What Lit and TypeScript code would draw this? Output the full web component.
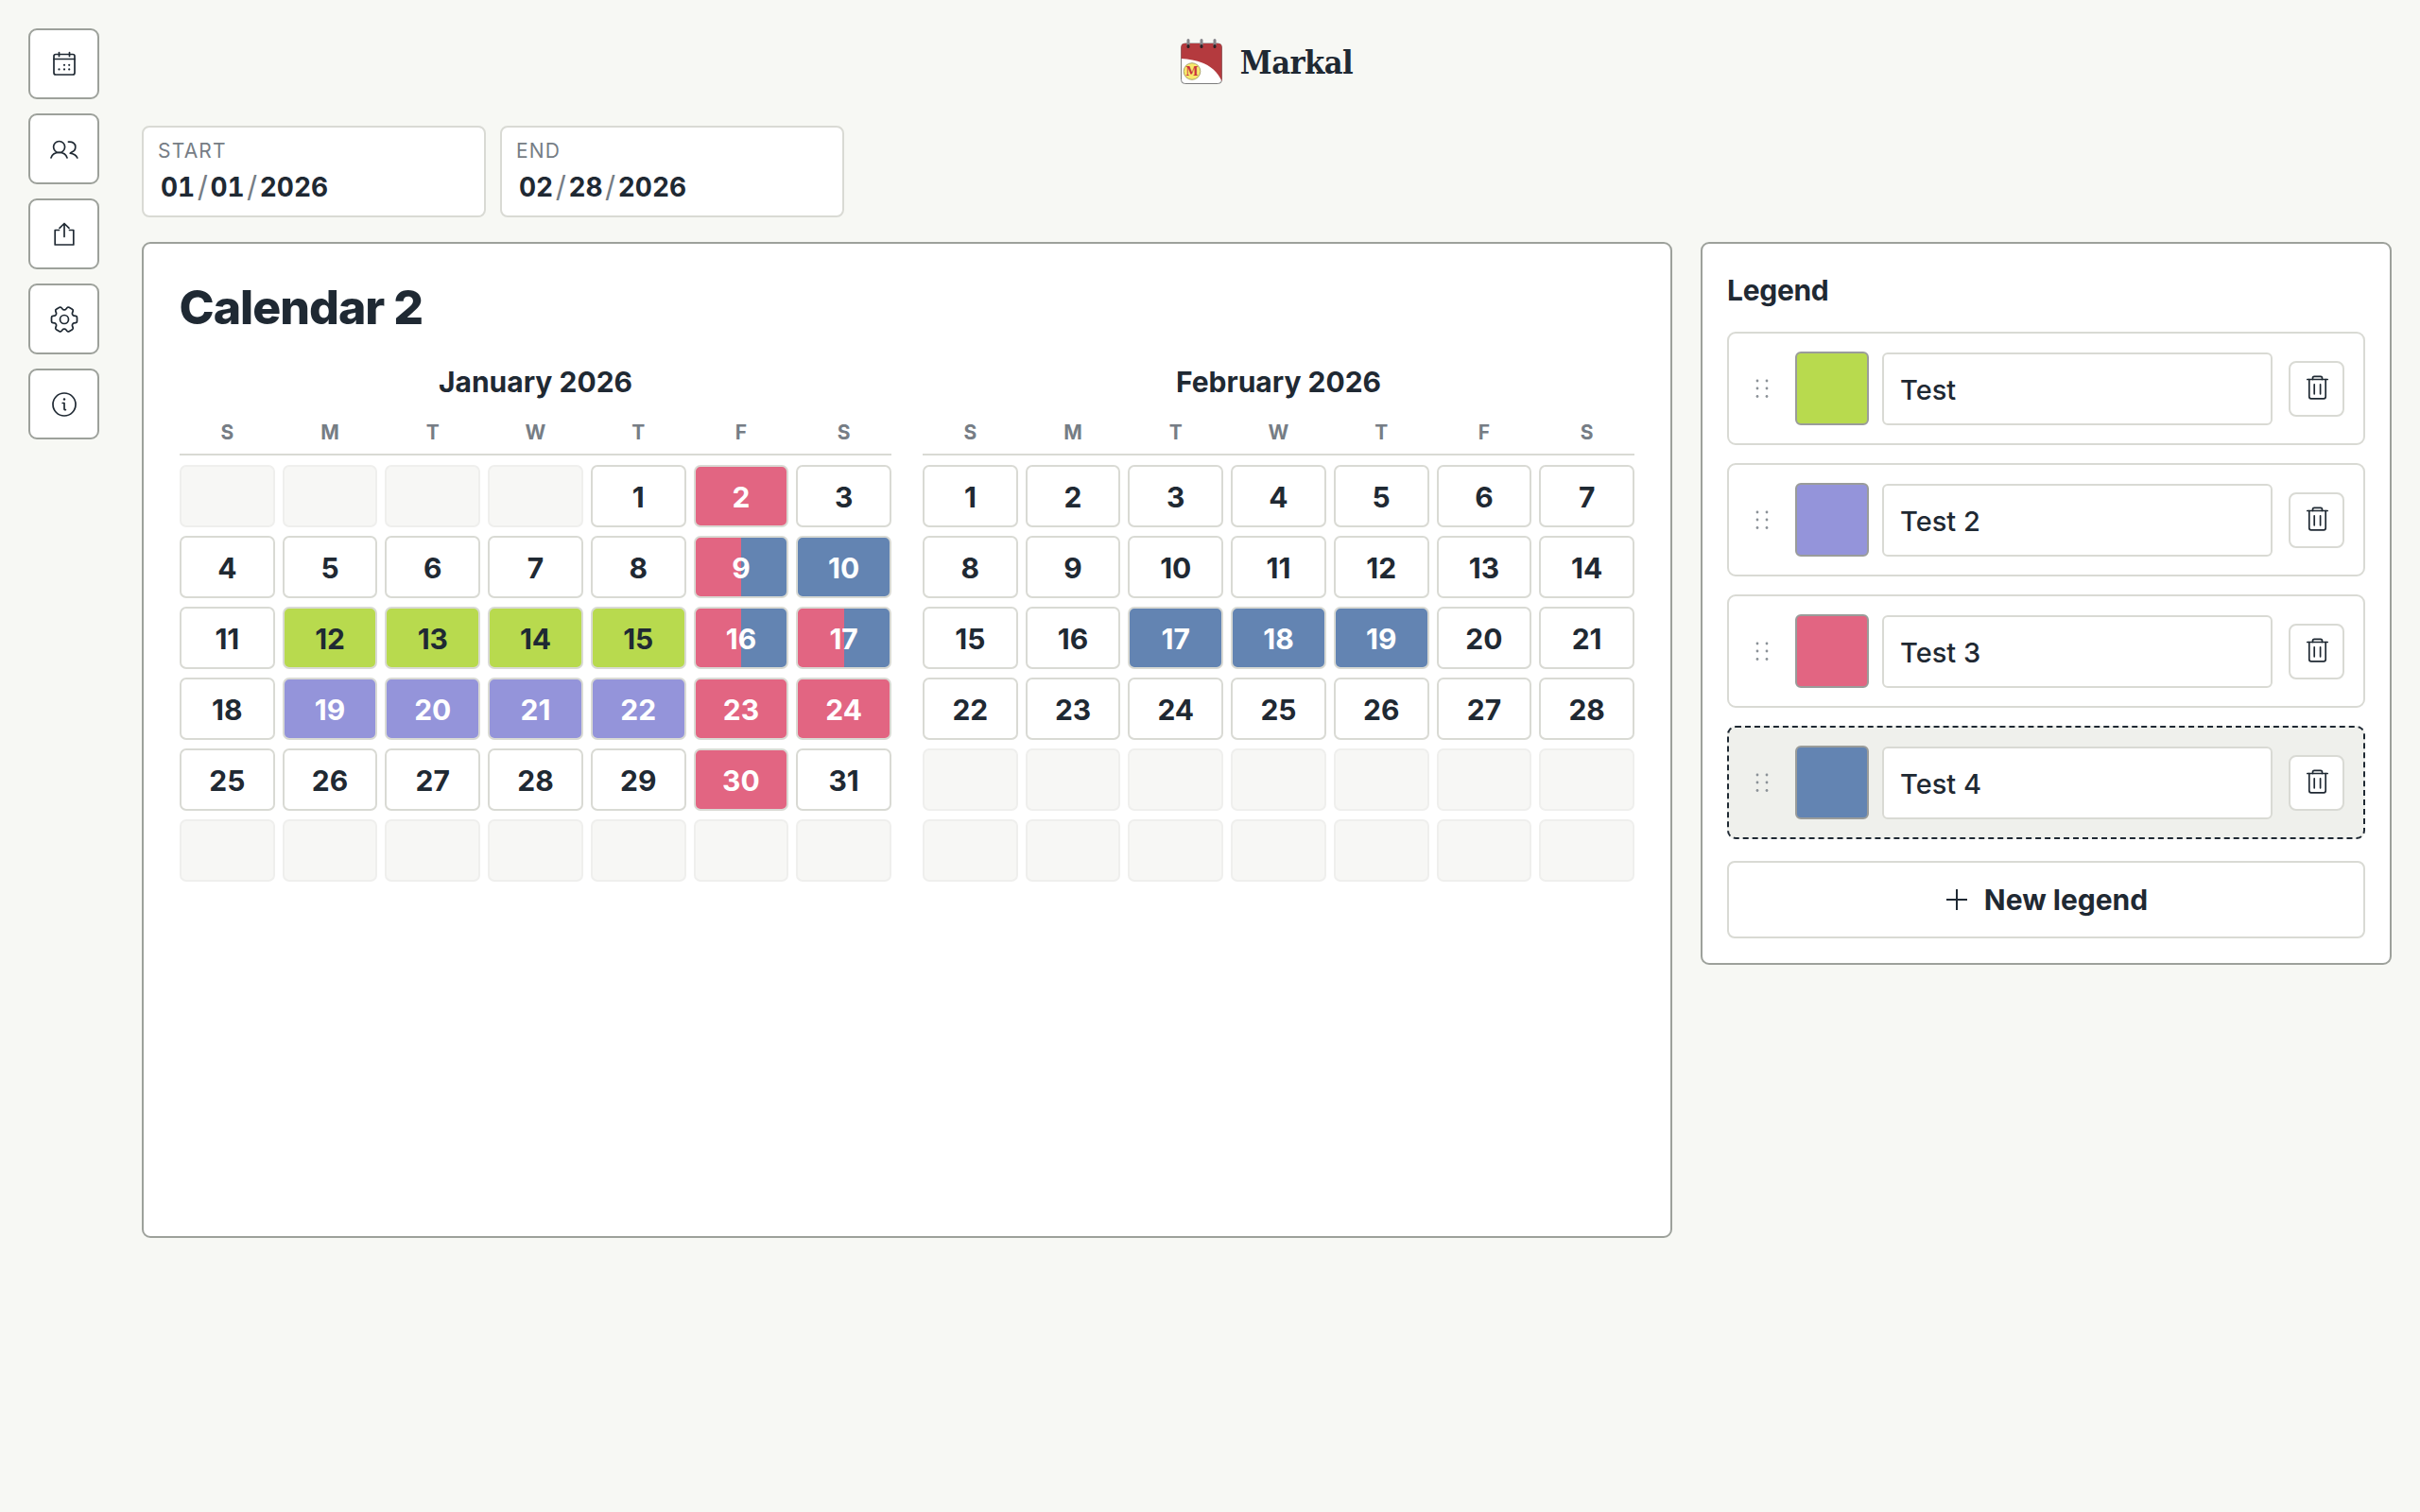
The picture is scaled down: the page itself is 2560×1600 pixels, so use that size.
import { LitElement, html, css, svg } from 'lit';
import { customElement } from 'lit/decorators.js';
import { classMap } from 'lit/directives/class-map.js';

const PINK = '#e26582';
const BLUE = '#6384b2';
const GREEN = '#b8da4e';
const PURPLE = '#9494da';

type Mark = { fill: string; dark?: boolean };

const g: Mark = { fill: GREEN, dark: true };
const pu: Mark = { fill: PURPLE };
const pk: Mark = { fill: PINK };
const bl: Mark = { fill: BLUE };
const split: Mark = { fill: `linear-gradient(90deg, ${PINK} 50%, ${BLUE} 50%)` };

const MONTHS = [
  {
    title: 'January 2026',
    offset: 4,
    days: 31,
    marks: {
      2: pk, 9: split, 10: bl,
      12: g, 13: g, 14: g, 15: g, 16: split, 17: split,
      19: pu, 20: pu, 21: pu, 22: pu, 23: pk, 24: pk,
      30: pk,
    } as Record<number, Mark>,
  },
  {
    title: 'February 2026',
    offset: 0,
    days: 28,
    marks: { 17: bl, 18: bl, 19: bl } as Record<number, Mark>,
  },
];

const LEGENDS = [
  { name: 'Test', color: GREEN },
  { name: 'Test 2', color: PURPLE },
  { name: 'Test 3', color: PINK },
  { name: 'Test 4', color: BLUE, dragging: true },
];

const WEEKDAYS = ['S', 'M', 'T', 'W', 'T', 'F', 'S'];

const icon = (body: unknown) => html`<svg class="icon" viewBox="0 0 30 30">${body}</svg>`;

const calendarIcon = icon(svg`
  <rect x="4" y="4.5" width="22" height="21.5" rx="2" />
  <path d="M4 9.5h22M9.5 2.5v4M20.5 2.5v4" />
  <g class="dots">
    <circle cx="15" cy="15.8" r="1.1" /><circle cx="20.2" cy="15.8" r="1.1" />
    <circle cx="9.5" cy="20.4" r="1.1" /><circle cx="15" cy="20.4" r="1.1" /><circle cx="20.2" cy="20.4" r="1.1" />
  </g>
`);

const usersIcon = icon(svg`
  <circle cx="9.6" cy="12.5" r="6" />
  <path d="M1 24c1.2-3.8 4.4-5.6 8.6-5.6s7.2 1.8 8.4 5.600" />
  <path d="M19.400 7.200c4.200-.6 7.400 1.800 7.400 5.200 0 2.400-1.400 4.600-4 5.600-.8.300-1.600.800-1.600 1.200 3 .4 6.200 1.900 7.600 4.800" />
`);

const shareIcon = icon(svg`
  <path d="M9.500 10.500H5.200v15.500h19.600V10.500H20.500" />
  <path d="M15 17.500V3.500M10 8.300l5-4.800 5 4.800" />
`);

const gearIcon = html`<svg class="icon" viewBox="2 2 20 20">
  <g transform="rotate(90 12 12)" stroke-width="1.150">
    <path d="M9.594 3.940c.09-.542.56-.94 1.110-.94h2.593c.55 0 1.020.398 1.110.94l.213 1.281c.063.374.313.686.645.870.074.040.147.083.22.127.325.196.72.257 1.075.124l1.217-.456a1.125 1.125 0 0 1 1.370.49l1.296 2.247a1.125 1.125 0 0 1-.26 1.431l-1.003.827c-.293.241-.438.613-.43.992a7.723 7.723 0 0 1 0 .255c-.008.378.137.75.43.991l1.004.827c.424.35.534.955.26 1.430l-1.298 2.247a1.125 1.125 0 0 1-1.369.491l-1.217-.456c-.355-.133-.75-.072-1.076.124a6.470 6.470 0 0 1-.22.128c-.331.183-.581.495-.644.869l-.213 1.281c-.09.543-.56.94-1.110.94h-2.594c-.55 0-1.019-.398-1.110-.94l-.213-1.281c-.062-.374-.312-.686-.644-.87a6.520 6.520 0 0 1-.22-.127c-.325-.196-.72-.257-1.076-.124l-1.217.456a1.125 1.125 0 0 1-1.369-.49l-1.297-2.247a1.125 1.125 0 0 1 .26-1.431l1.004-.827c.292-.24.437-.613.43-.991a6.932 6.932 0 0 1 0-.255c.007-.38-.138-.751-.43-.992l-1.004-.827a1.125 1.125 0 0 1-.26-1.430l1.297-2.247a1.125 1.125 0 0 1 1.370-.491l1.216.456c.356.133.751.072 1.076-.124.072-.044.146-.086.22-.128.332-.183.582-.495.644-.869l.214-1.280Z" />
    <circle cx="12" cy="12" r="3" />
  </g>
</svg>`;

const infoIcon = icon(svg`
  <circle cx="15" cy="15" r="12" />
  <path d="M13.200 13.500H15v6.200c0 .8.500 1.100 1.400 1" />
  <circle class="dot" cx="15" cy="9.500" r="1.200" />
`);

const trashIcon = icon(svg`
  <path d="M4.800 5.500h21.400" />
  <path d="M10.500 5.500V4c0-1 .6-1.700 1.600-1.700h6.800c1 0 1.600.7 1.600 1.700v1.500" />
  <path d="M6.800 5.500v18.300c0 1.200.8 2 2 2h13.400c1.200 0 2-.8 2-2V5.500" />
  <path d="M12.200 10.800v10M18.600 10.800v10" />
`);

const plusIcon = html`<svg class="plus" viewBox="0 0 22 22"><path d="M11 0v22M0 11h22" /></svg>`;

const dragHandle = html`<svg class="handle" viewBox="0 0 14 20">
  <circle cx="2" cy="2" r="1.400" /><circle cx="12" cy="2" r="1.400" />
  <circle cx="2" cy="10" r="1.400" /><circle cx="12" cy="10" r="1.400" />
  <circle cx="2" cy="18.500" r="1.400" /><circle cx="12" cy="18.500" r="1.400" />
</svg>`;

const logo = html`<svg class="logo" viewBox="0 0 44 48">
  <rect x="0.500" y="5" width="43" height="42.500" rx="4" fill="#fff" stroke="#7d7d7d" />
  <path d="M0.500 21C21 22 37 29 43.500 45V9a4 4 0 0 0-4-4H4.500a4 4 0 0 0-4 4Z" fill="#b43a3e" />
  <g stroke-linecap="round" stroke-width="3">
    <path d="M8 1.500v5M22 1.500v5M36 1.500v5" stroke="#85858a" />
    <path d="M8 7.500v1M22 7.500v1M36 7.500v1" stroke="#2a2225" />
  </g>
  <circle cx="12" cy="34.500" r="8.800" fill="#f8e96c" stroke="#a9a26a" />
  <text x="12" y="38.800" class="logo-m" text-anchor="middle">M</text>
</svg>`;

@customElement('app-root')
export class AppRoot extends LitElement {
  static styles = css`
    :host {
      display: block;
      min-height: 100vh;
      background: #f7f8f4;
      color: #1f2933;
      font-family: Inter, 'Liberation Sans', sans-serif;
    }

    * {
      box-sizing: border-box;
    }

    .page {
      display: flex;
      gap: 45px;
      padding: 30px;
    }

    /* Left rail */
    .rail {
      display: flex;
      flex-direction: column;
      gap: 15px;
      flex: none;
    }

    .rail-btn {
      display: flex;
      align-items: center;
      justify-content: center;
      width: 75px;
      height: 75px;
      background: #fff;
      border: 2px solid #9da19b;
      border-radius: 9px;
    }

    .icon {
      width: 30px;
      height: 30px;
      fill: none;
      stroke: #1f2933;
      stroke-width: 1.700;
      stroke-linecap: round;
      stroke-linejoin: round;
    }

    .dots circle,
    .dot {
      fill: #1f2933;
      stroke: none;
    }

    .main {
      flex: 1;
      min-width: 0;
    }

    /* Brand */
    .brand {
      display: flex;
      align-items: center;
      justify-content: center;
      gap: 19px;
      height: 70px;
      margin-bottom: 33px;
    }

    .logo {
      width: 44px;
      height: 48px;
    }

    .logo-m {
      font-family: 'DejaVu Serif', serif;
      font-weight: 700;
      font-size: 12px;
      fill: #c8343c;
    }

    .brand-name {
      padding-top: 2px;
      font-family: 'DejaVu Serif Condensed', 'DejaVu Serif', serif;
      font-weight: 700;
      font-size: 34px;
      letter-spacing: -0.500px;
      color: #1f2933;
    }

    /* Date range */
    .dates {
      display: flex;
      gap: 15px;
      margin-bottom: 26px;
    }

    .date {
      width: 364px;
      height: 97px;
      padding: 12px 18px 0 15px;
      background: #fff;
      border: 2px solid #d9dad4;
      border-radius: 8px;
    }

    .date-label {
      font-size: 21px;
      line-height: 25px;
      letter-spacing: 1.200px;
      color: #767d85;
    }

    .date-value {
      display: flex;
      align-items: center;
      margin: 9px 0 0 3px;
      font-size: 28px;
      line-height: 34px;
      font-weight: 650;
      font-variant-numeric: tabular-nums;
    }

    .sep {
      margin: 0 2.500px;
      font-weight: 400;
      font-size: 31px;
      color: #767d85;
    }

    .content {
      display: flex;
      align-items: flex-start;
      gap: 30px;
    }

    /* Calendar card */
    .calendar {
      flex: 1;
      height: 1054px;
      padding: 37px 38px 0 38px;
      background: #fff;
      border: 2px solid #9da19b;
      border-radius: 9px;
    }

    h1 {
      margin: 0 0 28px -0.500px;
      font-size: 50px;
      line-height: 60px;
      font-weight: 800;
      letter-spacing: -1px;
    }

    .months {
      display: grid;
      grid-template-columns: 1fr 1fr;
      gap: 33px;
    }

    .month-title {
      height: 40px;
      margin-bottom: 23px;
      padding-top: 1px;
      font-size: 30px;
      line-height: 40px;
      font-weight: 700;
      text-align: center;
    }

    .weekdays,
    .days {
      display: grid;
      grid-template-columns: repeat(7, 1fr);
      column-gap: 8px;
    }

    .weekdays {
      padding-bottom: 10px;
      border-bottom: 2px solid #d9dad4;
      margin-bottom: 10px;
      font-size: 21px;
      line-height: 24px;
      font-weight: 700;
      color: #767d85;
      text-align: center;
    }

    .days {
      grid-auto-rows: 66px;
      row-gap: 9px;
    }

    .day {
      display: flex;
      align-items: center;
      justify-content: center;
      padding-top: 2px;
      background: #fff;
      border: 2px solid #d9dad4;
      border-radius: 7px;
      font-size: 30px;
      font-weight: 700;
      color: #1f2933;
      background-clip: padding-box;
    }

    .day.marked {
      color: #fff;
    }

    .day.dark {
      color: #1f2933;
    }

    .day.empty {
      background: #f7f7f5;
      border-color: #efefed;
    }

    /* Legend card */
    .legend {
      flex: none;
      width: 731px;
      padding: 29px 26px 26px;
      background: #fff;
      border: 2px solid #9da19b;
      border-radius: 9px;
    }

    h2 {
      margin: 0 0 24px;
      font-size: 30px;
      line-height: 40px;
      font-weight: 700;
      letter-spacing: -0.300px;
    }

    .legend-list {
      display: flex;
      flex-direction: column;
      gap: 19px;
      margin-bottom: 23px;
    }

    .legend-item {
      display: flex;
      align-items: center;
      height: 120px;
      padding: 0 20px 0 20px;
      background: #fff;
      border: 2px solid #d9dad4;
      border-radius: 9px;
    }

    .legend-item.dragging {
      background: #eff0ec;
      border: 2px dashed #1f2933;
    }

    .handle-wrap {
      display: flex;
      justify-content: center;
      width: 30px;
      margin-right: 19.500px;
    }

    .handle {
      width: 14px;
      height: 20px;
      fill: #8b9197;
    }

    .swatch {
      flex: none;
      width: 78px;
      height: 78px;
      margin-right: 14px;
      border: 2px solid #9a9c9a;
      border-radius: 6px;
    }

    .name {
      flex: 1;
      min-width: 0;
      height: 77px;
      padding: 3px 17.500px 0;
      background: #fff;
      border: 2px solid #d9dad4;
      border-radius: 6px;
      font: 500 29px Inter, 'Liberation Sans', sans-serif;
      color: #1f2933;
      outline: none;
    }

    .trash {
      display: flex;
      flex: none;
      align-items: center;
      justify-content: center;
      width: 59px;
      height: 59px;
      margin-left: 17.500px;
      background: #fff;
      border: 2px solid #d9dad4;
      border-radius: 8px;
    }

    .new-legend {
      display: flex;
      align-items: center;
      justify-content: center;
      gap: 18px;
      width: 100%;
      height: 82px;
      padding-left: 2px;
      background: #fff;
      border: 2px solid #d9dad4;
      border-radius: 8px;
      font: 700 30px Inter, 'Liberation Sans', sans-serif;
      color: #1f2933;
    }

    .plus {
      width: 22px;
      height: 22px;
      fill: none;
      stroke: #1f2933;
      stroke-width: 2;
    }
  `;

  private renderDate(label: string, parts: string[]) {
    return html`
      <div class="date">
        <div class="date-label">${label}</div>
        <div class="date-value">
          ${parts[0]}<span class="sep">/</span>${parts[1]}<span class="sep">/</span>${parts[2]}
        </div>
      </div>
    `;
  }

  private renderMonth(month: (typeof MONTHS)[number]) {
    const cells: (number | null)[] = [];
    for (let i = 0; i < month.offset; i++) cells.push(null);
    for (let d = 1; d <= month.days; d++) cells.push(d);
    while (cells.length < 42) cells.push(null);

    return html`
      <section>
        <div class="month-title">${month.title}</div>
        <div class="weekdays">${WEEKDAYS.map((d) => html`<div>${d}</div>`)}</div>
        <div class="days">
          ${cells.map((d) => {
            if (d === null) return html`<div class="day empty"></div>`;
            const mark = month.marks[d];
            return html`<div
              class=${classMap({ day: true, marked: !!mark, dark: !!mark?.dark })}
              style=${mark ? `background: ${mark.fill}; background-origin: border-box` : ''}
            >
              ${d}
            </div>`;
          })}
        </div>
      </section>
    `;
  }

  render() {
    return html`
      <div class="page">
        <nav class="rail">
          ${[calendarIcon, usersIcon, shareIcon, gearIcon, infoIcon].map(
            (i) => html`<div class="rail-btn">${i}</div>`
          )}
        </nav>

        <div class="main">
          <header class="brand">${logo}<span class="brand-name">Markal</span></header>

          <div class="dates">
            ${this.renderDate('START', ['01', '01', '2026'])}
            ${this.renderDate('END', ['02', '28', '2026'])}
          </div>

          <div class="content">
            <main class="calendar">
              <h1>Calendar 2</h1>
              <div class="months">${MONTHS.map((m) => this.renderMonth(m))}</div>
            </main>

            <aside class="legend">
              <h2>Legend</h2>
              <div class="legend-list">
                ${LEGENDS.map(
                  (l) => html`
                    <div class=${classMap({ 'legend-item': true, dragging: !!l.dragging })}>
                      <div class="handle-wrap">${dragHandle}</div>
                      <div class="swatch" style="background: ${l.color}"></div>
                      <input class="name" .value=${l.name} />
                      <div class="trash">${trashIcon}</div>
                    </div>
                  `
                )}
              </div>
              <div class="new-legend">${plusIcon}<span>New legend</span></div>
            </aside>
          </div>
        </div>
      </div>
    `;
  }
}
